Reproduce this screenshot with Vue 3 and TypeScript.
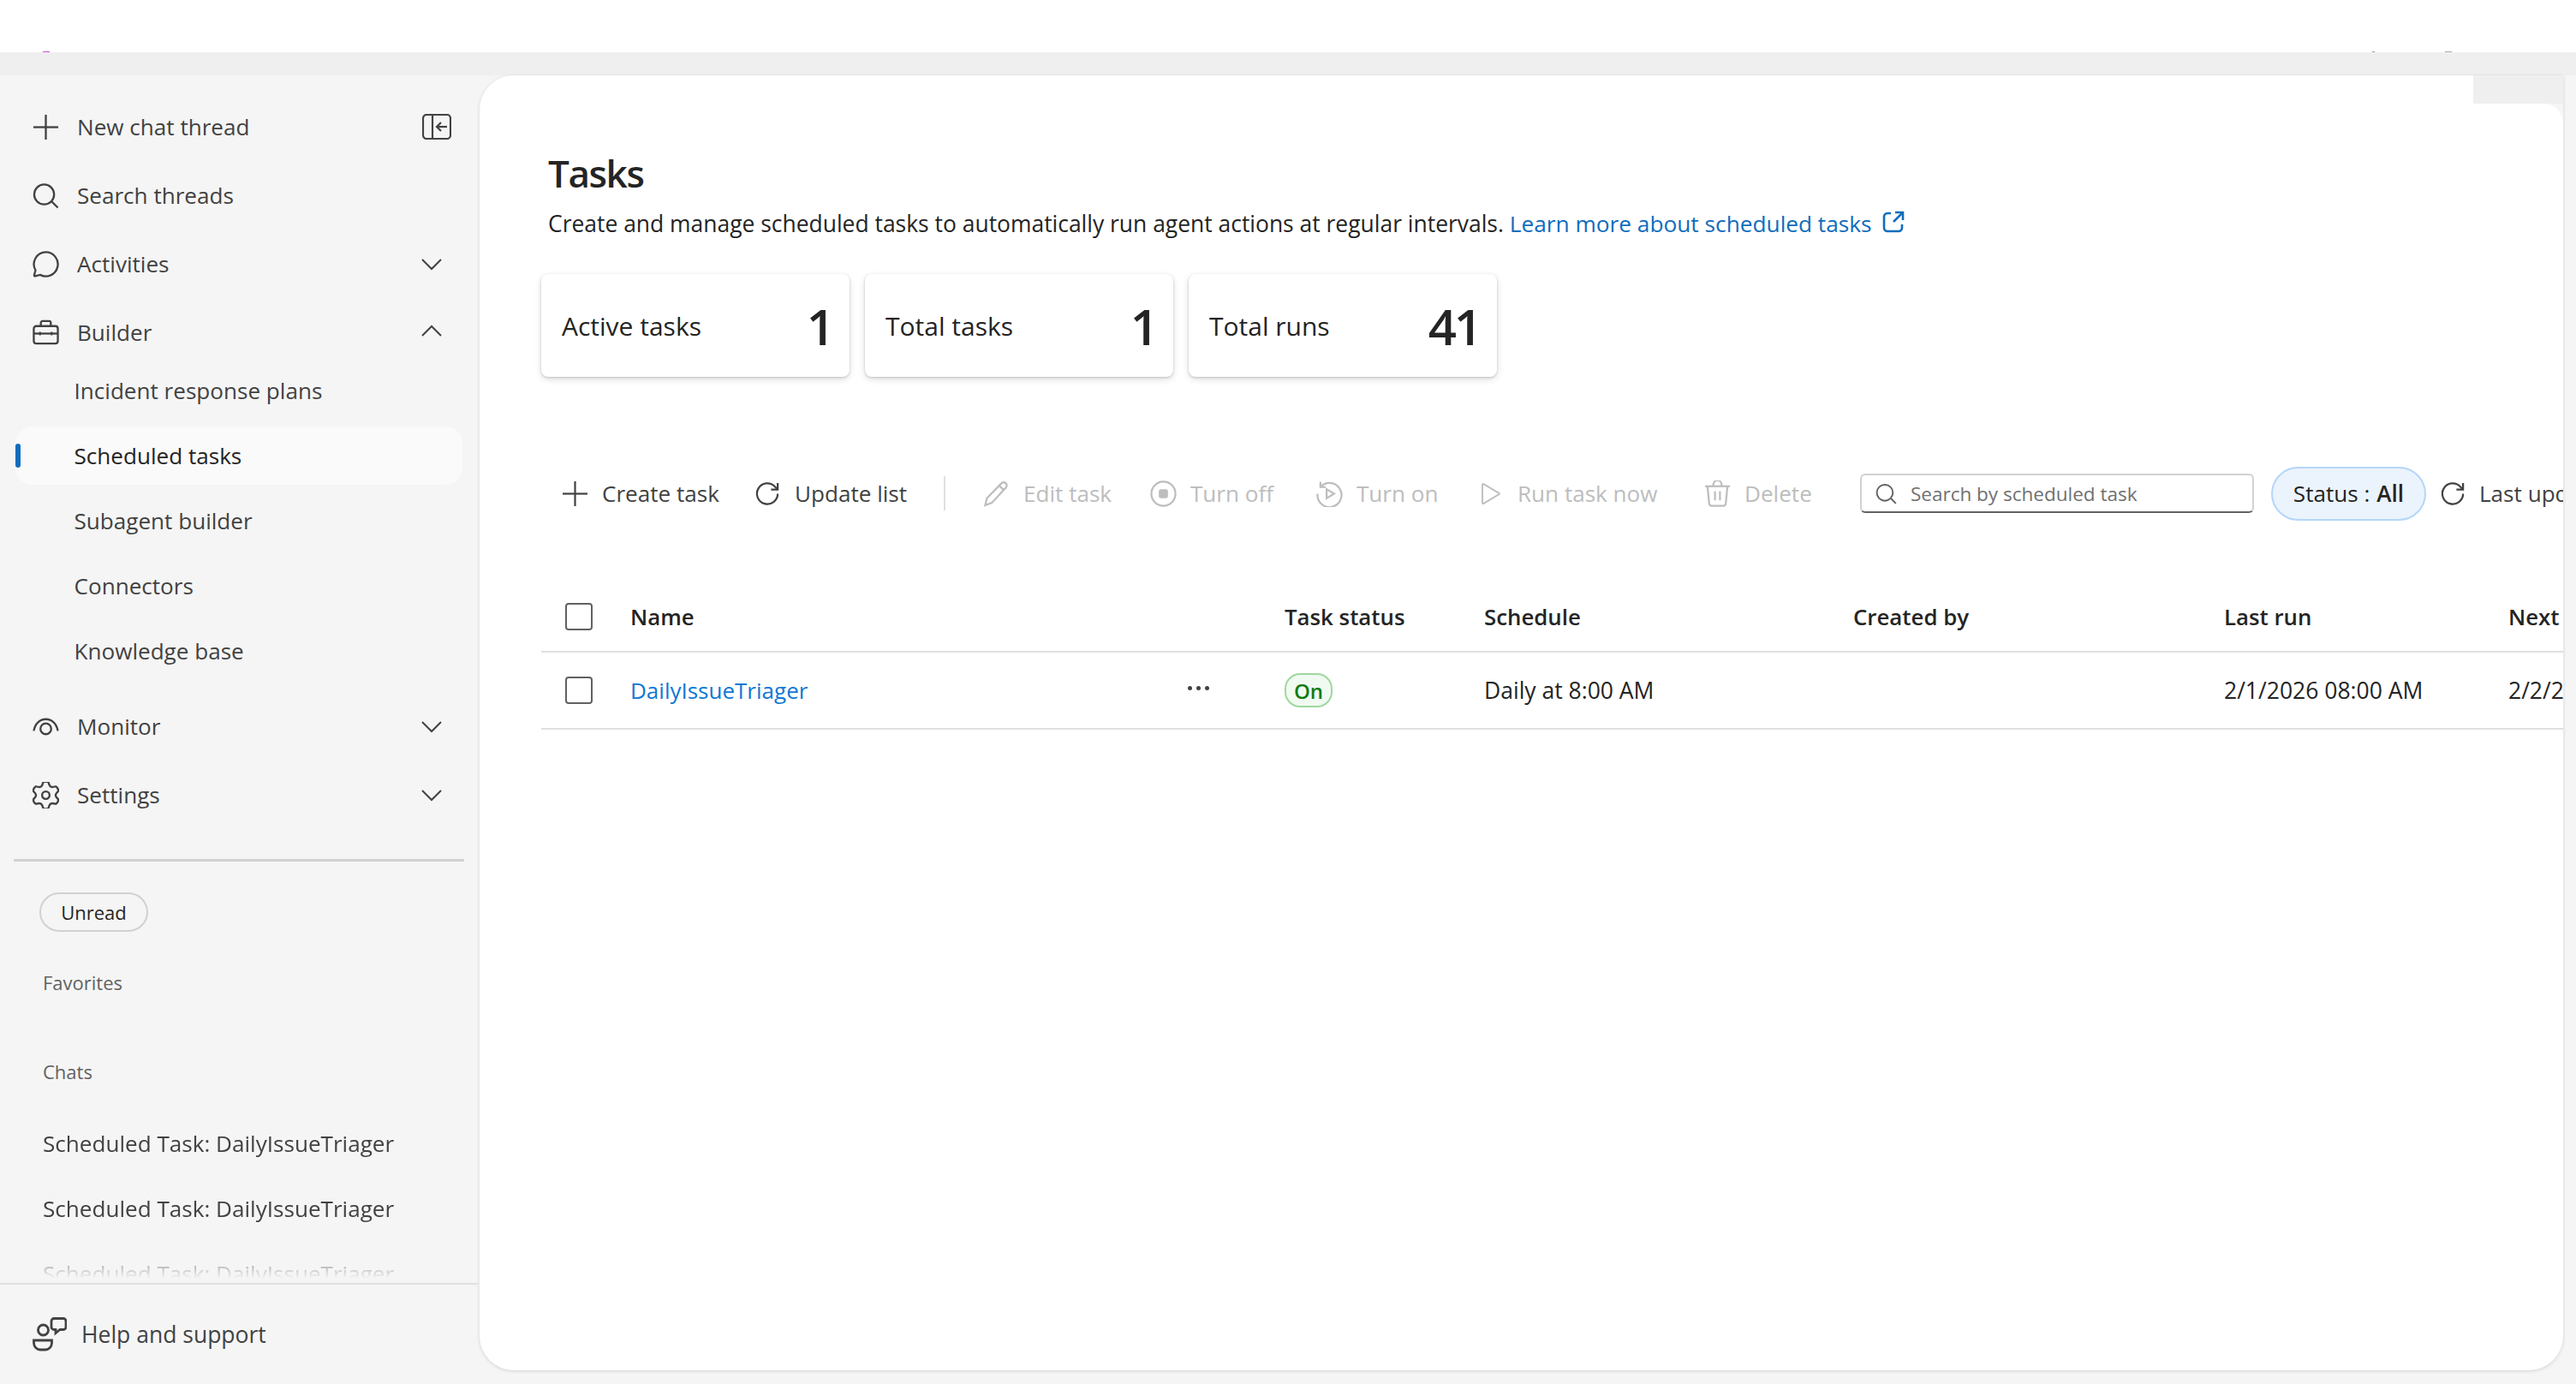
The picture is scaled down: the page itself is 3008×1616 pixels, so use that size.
<script setup lang="ts">
interface NavItem {
  label: string
  icon: string[]
  chevron?: 'up' | 'down'
  subs?: { label: string; active?: boolean }[]
}

interface ToolItem {
  label: string
  icon: string[]
  off?: boolean
  slim?: boolean
  fill?: string
}

// gear outline with six soft lobes, same shape as the fluent settings icon
function gearPath(): string {
  const c = 16
  let d = ''
  for (let i = 0; i < 6; i++) {
    const a = (Math.PI / 3) * i - Math.PI / 2
    const step = Math.PI / 3
    const p = (r: number, t: number) =>
      `${(c + r * Math.cos(t)).toFixed(2)} ${(c + r * Math.sin(t)).toFixed(2)}`
    d += `${i === 0 ? 'M' : 'L'}${p(16, a - 0.2)} Q${p(17.4, a)} ${p(16, a + 0.2)} Q${p(12, a + 0.36)} ${p(11.8, a + step / 2)} Q${p(12, a + step - 0.36)} ${p(16, a + step - 0.2)} `
  }
  return d + 'Z'
}

const navItems: NavItem[] = [
  { label: 'New chat thread', icon: ['M16 1v30', 'M1 16h30'] },
  { label: 'Search threads', icon: ['M14 2.5a12 12 0 1 1 0 24a12 12 0 0 1 0-24z', 'M23 23l7.5 7.5'] },
  {
    label: 'Activities',
    chevron: 'down',
    icon: ['M16 1.5a14.5 14.5 0 1 1-6.8 27.3l-6 1.6a1 1 0 0 1-1.2-1.2l1.6-6A14.5 14.5 0 0 1 16 1.5z']
  },
  {
    label: 'Builder',
    chevron: 'up',
    icon: [
      'M4.5 8h23a3 3 0 0 1 3 3v15a3 3 0 0 1-3 3h-23a3 3 0 0 1-3-3v-15a3 3 0 0 1 3-3z',
      'M10 8V4a2 2 0 0 1 2-2h8a2 2 0 0 1 2 2v4',
      'M1.5 17h29',
      'M9 15v4',
      'M23 15v4'
    ],
    subs: [
      { label: 'Incident response plans' },
      { label: 'Scheduled tasks', active: true },
      { label: 'Subagent builder' },
      { label: 'Connectors' },
      { label: 'Knowledge base' }
    ]
  },
  {
    label: 'Monitor',
    chevron: 'down',
    icon: ['M1.5 21C3 12 9 7 16 7s13 5 14.5 14', 'M16 12a6.5 6.5 0 1 1 0 13a6.5 6.5 0 0 1 0-13z']
  },
  {
    label: 'Settings',
    chevron: 'down',
    icon: [gearPath(), 'M16 11.5a4.5 4.5 0 1 1 0 9a4.5 4.5 0 0 1 0-9z']
  }
]

const tools: ToolItem[] = [
  { label: 'Create task', icon: ['M16 1v30', 'M1 16h30'] },
  { label: 'Update list', icon: ['M28 16a12.5 12.5 0 1 1-3.6-8.8L28 11', 'M28 3v8h-8'] },
  {
    label: 'Edit task',
    off: true,
    icon: ['M2.5 30l2-8.5L22 3.5a3.6 3.6 0 0 1 5.5 5L10.5 27z', 'M19.5 6.5l5.5 5']
  },
  {
    label: 'Turn off',
    off: true,
    icon: ['M16 1.5a14.5 14.5 0 1 1 0 29a14.5 14.5 0 0 1 0-29z'],
    fill: 'M13 10.5h6a2.5 2.5 0 0 1 2.5 2.5v6a2.5 2.5 0 0 1-2.5 2.5h-6a2.5 2.5 0 0 1-2.5-2.5v-6a2.5 2.5 0 0 1 2.5-2.5z'
  },
  {
    label: 'Turn on',
    off: true,
    icon: [
      'M6 7a14.5 14.5 0 1 1-4.5 9',
      'M5 1.5V8h6.5',
      'M12.5 10.5l9 5.5-9 5.5z'
    ]
  },
  {
    label: 'Run task now',
    off: true,
    slim: true,
    icon: ['M3 2l21 12.5a1.5 1.5 0 0 1 0 3L3 30a1.2 1.2 0 0 1-1.8-1V3a1.2 1.2 0 0 1 1.8-1z']
  },
  {
    label: 'Delete',
    off: true,
    icon: [
      'M1 7h30',
      'M11 7V5a5 5 0 0 1 10 0v2',
      'M4 7l2 21a3 3 0 0 0 3 2.5h14a3 3 0 0 0 3-2.5l2-21',
      'M13 13v11',
      'M19 13v11'
    ]
  }
]

const stats = [
  { label: 'Active tasks', value: 1 },
  { label: 'Total tasks', value: 1 },
  { label: 'Total runs', value: 41 }
]

const chats = ['Scheduled Task: DailyIssueTriager', 'Scheduled Task: DailyIssueTriager', 'Scheduled Task: DailyIssueTriager']
</script>

<template>
  <div class="app">
    <div class="topbar">
      <span class="speck speck-pink"></span>
      <span class="speck speck-a"></span>
      <span class="speck speck-b"></span>
    </div>
    <div class="band"></div>
    <div class="body">
      <aside class="sidebar">
        <nav class="nav">
          <template v-for="item in navItems" :key="item.label">
            <div class="nav-row">
              <svg class="nav-icon" viewBox="0 0 32 32">
                <path v-for="(d, i) in item.icon" :key="i" :d="d" />
              </svg>
              <span class="nav-label">{{ item.label }}</span>
              <svg v-if="item.chevron" class="chevron" :class="{ up: item.chevron === 'up' }" viewBox="0 0 24 14">
                <path d="M1 1l11 11L23 1" />
              </svg>
              <svg v-if="item.label === 'New chat thread'" class="collapse" viewBox="0 0 34 30">
                <rect x="1" y="1" width="32" height="28" rx="4" />
                <path d="M12 1v28" />
                <path d="M17 15h12" />
                <path d="M22 10l-5 5 5 5" />
              </svg>
            </div>
            <div v-if="item.subs" class="subs">
              <div v-for="sub in item.subs" :key="sub.label" class="sub-row" :class="{ active: sub.active }">
                {{ sub.label }}
              </div>
            </div>
          </template>
        </nav>
        <div class="side-divider"></div>
        <button class="unread">Unread</button>
        <div class="section-label favorites">Favorites</div>
        <div class="section-label chats-label">Chats</div>
        <div class="chat-list">
          <div v-for="(chat, i) in chats" :key="i" class="chat-row">{{ chat }}</div>
        </div>
        <div class="help">
          <svg class="help-icon" viewBox="0 0 40 40">
            <path d="M12.5 9a6 6 0 1 1 0 12a6 6 0 0 1 0-12z" />
            <path d="M1.5 27h21v3a8 8 0 0 1-8 8h-5a8 8 0 0 1-8-8z" />
            <path d="M25 1.5h11a3 3 0 0 1 3 3v7a3 3 0 0 1-3 3h-4l-5 4v-4h-2a3 3 0 0 1-3-3v-7a3 3 0 0 1 3-3z" />
          </svg>
          <span>Help and support</span>
        </div>
      </aside>

      <main class="card">
        <div class="corner-patch"></div>
        <div class="corner-round"></div>
        <h1 class="title">Tasks</h1>
        <p class="desc">
          Create and manage scheduled tasks to automatically run agent actions at regular intervals.
          <a class="link">Learn more about scheduled tasks
            <svg class="ext" viewBox="0 0 26 26">
              <path d="M10 3H6a4 4 0 0 0-4 4v13a4 4 0 0 0 4 4h13a4 4 0 0 0 4-4v-4" />
              <path d="M15 2h9v9" />
              <path d="M24 2L13 13" />
            </svg>
          </a>
        </p>

        <div class="stats">
          <div v-for="stat in stats" :key="stat.label" class="stat">
            <span class="stat-label">{{ stat.label }}</span>
            <span class="stat-value">{{ stat.value }}</span>
          </div>
        </div>

        <div class="toolbar">
          <template v-for="(tool, i) in tools" :key="tool.label">
            <div class="tool" :class="{ off: tool.off, slim: tool.slim }">
              <svg class="tool-icon" viewBox="0 0 32 32">
                <path v-for="(d, j) in tool.icon" :key="j" :d="d" />
                <path v-if="tool.fill" class="solid" :d="tool.fill" />
              </svg>
              <span>{{ tool.label }}</span>
            </div>
            <div v-if="i === 1" class="tool-sep"></div>
          </template>
          <div class="search">
            <svg class="search-icon" viewBox="0 0 32 32">
              <path d="M14 2.5a12 12 0 1 1 0 24a12 12 0 0 1 0-24z" />
              <path d="M23 23l7.5 7.5" />
            </svg>
            <span>Search by scheduled task</span>
          </div>
          <div class="status">Status : <b>All</b></div>
          <div class="last-update">
            <svg class="tool-icon dark" viewBox="0 0 32 32">
              <path d="M28 16a12.5 12.5 0 1 1-3.6-8.8L28 11" />
              <path d="M28 3v8h-8" />
            </svg>
            <span>Last update</span>
          </div>
        </div>

        <div class="table">
          <div class="tr head">
            <div><span class="check"></span></div>
            <div>Name</div>
            <div>Task status</div>
            <div>Schedule</div>
            <div>Created by</div>
            <div>Last run</div>
            <div>Next run</div>
          </div>
          <div class="tr">
            <div><span class="check"></span></div>
            <div class="name-cell">
              <a class="task-link">DailyIssueTriager</a>
              <span class="more"><i></i><i></i><i></i></span>
            </div>
            <div><span class="badge">On</span></div>
            <div>Daily at 8:00 AM</div>
            <div></div>
            <div>2/1/2026 08:00 AM</div>
            <div>2/2/2026 08:00 AM</div>
          </div>
        </div>
      </main>
    </div>
  </div>
</template>

<style>
html,
body {
  margin: 0;
  background: #f5f5f5;
}
</style>

<style scoped>
.app {
  width: 3008px;
  height: 1616px;
  display: flex;
  flex-direction: column;
  overflow: hidden;
  background: #f5f5f5;
  font-family: 'Open Sans', 'Noto Sans', sans-serif;
  color: #242424;
}
.topbar {
  height: 61px;
  background: #fff;
  position: relative;
  flex: none;
}
.speck {
  position: absolute;
  bottom: 0;
  height: 1px;
}
.speck-pink {
  left: 50px;
  width: 8px;
  background: #c850d8;
}
.speck-a {
  left: 2770px;
  width: 3px;
  background: #999;
}
.speck-b {
  left: 2855px;
  width: 8px;
  background: #aaa;
}
.band {
  height: 27px;
  background: #efefef;
  flex: none;
}
.body {
  flex: 1;
  display: flex;
  min-height: 0;
}

/* sidebar */
.sidebar {
  width: 560px;
  flex: none;
  display: flex;
  flex-direction: column;
  padding-top: 26px;
  box-sizing: border-box;
  font-size: 26.1px;
  color: #424242;
}
.nav {
  display: flex;
  flex-direction: column;
  gap: 12px;
  padding-left: 38px;
}
.nav-row {
  height: 68px;
  display: flex;
  align-items: center;
  position: relative;
}
.nav-icon {
  width: 31px;
  height: 31px;
  flex: none;
  margin-right: 21px;
  fill: none;
  stroke: #424242;
  stroke-width: 2.4;
}
.chevron {
  width: 24px;
  height: 14px;
  margin-left: auto;
  margin-right: 44px;
  margin-top: 2px;
  fill: none;
  stroke: #424242;
  stroke-width: 2;
}
.chevron.up {
  margin-top: -4px;
  transform: rotate(180deg);
}
.collapse {
  width: 34px;
  height: 30px;
  margin-left: auto;
  margin-right: 33px;
  fill: none;
  stroke: #424242;
  stroke-width: 2.2;
}
.subs {
  display: flex;
  flex-direction: column;
  gap: 8px;
  margin: -12px 0 8px -20px;
}
.sub-row {
  height: 68px;
  width: 522px;
  display: flex;
  align-items: center;
  padding-left: 68.5px;
  box-sizing: border-box;
  border-radius: 20px;
  position: relative;
}
.sub-row.active {
  background: #fafafa;
  color: #242424;
}
.sub-row.active::before {
  content: '';
  position: absolute;
  left: 0;
  top: 20px;
  width: 6px;
  height: 28px;
  border-radius: 3px;
  background: #0f6cbd;
}
.side-divider {
  height: 3px;
  background: #d1d1d1;
  margin: 41px 18px 0 16px;
  flex: none;
}
.unread {
  width: 127px;
  height: 46px;
  margin: 36px 0 0 46px;
  padding: 0;
  flex: none;
  border: 2px solid #d1d1d1;
  border-radius: 23px;
  background: transparent;
  font: inherit;
  font-size: 22px;
  color: #242424;
}
.section-label {
  height: 40px;
  line-height: 40px;
  margin-left: 50px;
  font-size: 22px;
  color: #616161;
  flex: none;
}
.favorites {
  margin-top: 39px;
}
.chats-label {
  margin-top: 64px;
}
.chat-list {
  flex: 1;
  min-height: 0;
  margin-top: 26px;
  overflow: hidden;
  padding-left: 50px;
  mask-image: linear-gradient(#000 150px, transparent 196px);
}
.chat-row {
  height: 76px;
  line-height: 76px;
  white-space: nowrap;
}
.help {
  height: 118px;
  flex: none;
  margin-right: 2px;
  box-sizing: border-box;
  border-top: 2px solid #e0e0e0;
  display: flex;
  align-items: center;
  padding-left: 38px;
  font-size: 26.5px;
}
.help-icon {
  width: 40px;
  height: 40px;
  margin-right: 17px;
  fill: none;
  stroke: #424242;
  stroke-width: 2.8;
}

/* main card */
.card {
  flex: 1;
  margin: 0 15px 16px 0;
  padding: 90px 0 0 72px;
  box-sizing: border-box;
  min-width: 0;
  background: #fff;
  border-radius: 40px 0 40px 40px;
  box-shadow: 0 1px 4px rgba(0, 0, 0, 0.14);
  position: relative;
  overflow: hidden;
}
.corner-patch {
  position: absolute;
  top: 0;
  right: 0;
  width: 105px;
  height: 33px;
  background: #efefef;
}
.corner-round {
  position: absolute;
  top: 33px;
  right: 0;
  width: 22px;
  height: 22px;
  background: radial-gradient(circle at 0 100%, #fff 21.5px, #f5f5f5 22px);
}
.title {
  margin: 0 0 0 8px;
  font-size: 44px;
  line-height: 48px;
  letter-spacing: -1.4px;
  font-weight: 600;
  color: #242424;
}
.desc {
  margin: 15px 0 0 8px;
  font-size: 26.45px;
  line-height: 40px;
  white-space: nowrap;
}
.link {
  color: #0f6cbd;
  font-size: 26.25px;
}
.ext {
  width: 26px;
  height: 26px;
  margin-left: 6px;
  vertical-align: -1px;
  fill: none;
  stroke: #0f6cbd;
  stroke-width: 2.6;
}
.stats {
  display: flex;
  gap: 18px;
  margin-top: 39px;
}
.stat {
  width: 360px;
  height: 120px;
  padding: 0 20px 0 24px;
  box-sizing: border-box;
  display: flex;
  align-items: center;
  justify-content: space-between;
  border-radius: 8px;
  background: #fff;
  box-shadow: 0 1px 3px rgba(0, 0, 0, 0.18), 0 3px 8px rgba(0, 0, 0, 0.12);
}
.stat-label {
  font-size: 30px;
}
.stat-value {
  font-size: 58px;
  font-weight: 600;
  letter-spacing: -3px;
}
.toolbar {
  display: grid;
  grid-template-columns: 225px 221px 46px 195px 194px 193px 260px 182px 480px 197px 1fr;
  align-items: center;
  height: 64px;
  margin-top: 104px;
  padding-left: 24px;
  font-size: 26.1px;
  white-space: nowrap;
  color: #424242;
}
.tool,
.last-update {
  display: flex;
  align-items: center;
  gap: 16px;
}
.tool.off {
  color: #bdbdbd;
}
.tool-icon {
  width: 31px;
  height: 31px;
  flex: none;
  fill: none;
  stroke: #424242;
  stroke-width: 2.3;
}
.tool.slim .tool-icon {
  width: 26px;
}
.tool.off .tool-icon {
  stroke: #bdbdbd;
}
.tool-icon .solid {
  fill: #bdbdbd;
  stroke: none;
}
.tool-sep {
  width: 2px;
  height: 40px;
  background: #e0e0e0;
}
.search {
  width: 460px;
  height: 46px;
  box-sizing: border-box;
  display: flex;
  align-items: center;
  padding-left: 16px;
  gap: 16px;
  border: 2px solid #d1d1d1;
  border-bottom-color: #616161;
  border-radius: 6px;
  font-size: 22.5px;
  color: #707070;
}
.search-icon {
  width: 25px;
  height: 25px;
  fill: none;
  stroke: #616161;
  stroke-width: 2.4;
}
.status {
  width: 181px;
  height: 63px;
  box-sizing: border-box;
  display: flex;
  align-items: center;
  justify-content: center;
  gap: 8px;
  border: 2px solid #b4d6fa;
  border-radius: 32px;
  background: #ebf3fc;
  color: #242424;
}
.status b {
  font-weight: 600;
}
.last-update {
  gap: 15px;
  color: #424242;
}
.table {
  margin-top: 72px;
  font-size: 26.5px;
}
.tr {
  display: grid;
  grid-template-columns: 104px 764px 233px 431px 433px 332px 1fr;
  align-items: center;
  height: 90px;
  box-sizing: border-box;
  border-bottom: 2px solid #e0e0e0;
  white-space: nowrap;
}
.tr.head {
  height: 82px;
  font-size: 25.8px;
  font-weight: 600;
}
.check {
  display: block;
  width: 32px;
  height: 32px;
  margin-left: 28px;
  box-sizing: border-box;
  border: 2px solid #616161;
  border-radius: 4px;
}
.name-cell {
  position: relative;
}
.task-link {
  color: #0f78d4;
  font-size: 26px;
}
.more {
  position: absolute;
  left: 651px;
  top: 50%;
  display: flex;
  gap: 5px;
  transform: translateY(-5px);
}
.more i {
  width: 5px;
  height: 5px;
  border-radius: 50%;
  background: #424242;
}
.badge {
  display: inline-flex;
  align-items: center;
  justify-content: center;
  width: 56px;
  height: 40px;
  box-sizing: border-box;
  border: 2px solid #9fd89f;
  border-radius: 18px;
  background: #f1faf1;
  color: #107c10;
  font-size: 24px;
  font-weight: 600;
}
</style>
